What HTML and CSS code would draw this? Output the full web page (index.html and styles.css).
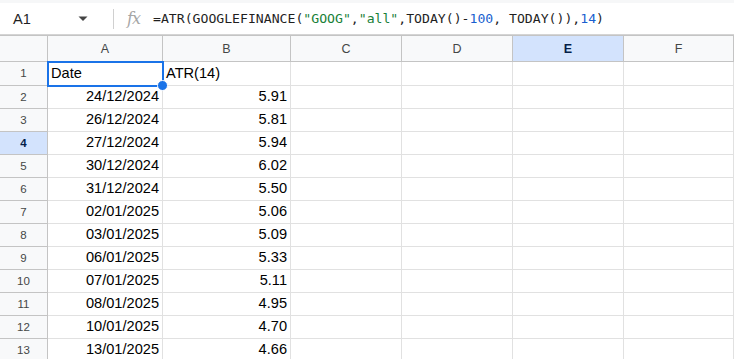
FILE: index.html
```html
<!DOCTYPE html>
<html>
<head>
<meta charset="utf-8">
<link rel="stylesheet" href="styles.css">
</head>
<body>
<div class="topstrip"></div>
<div class="fbar">
  <div class="namebox">A1</div>
  <div class="dd"><svg width="10" height="6" viewBox="0 0 10 6"><path d="M0.5 0.5 L9.5 0.5 L5 5 Z" fill="#444"/></svg></div>
  <div class="sep"></div>
  <div class="fx">fx</div>
  <div class="formula">=ATR(GOOGLEFINANCE(<span class="str">"GOOG"</span>,<span class="str">"all"</span>,TODAY()-<span class="num">100</span>, TODAY()),<span class="num">14</span>)</div>
</div>
<div class="grid">
  <div class="hd corner"></div>
  <div class="hd col">A</div>
  <div class="hd col">B</div>
  <div class="hd col">C</div>
  <div class="hd col">D</div>
  <div class="hd col sel">E</div>
  <div class="hd col">F</div>

  <div class="hd rh r1">1</div>
  <div class="c r1 l active">Date<span class="handle"></span></div>
  <div class="c r1 l">ATR(14)</div>
  <div class="c r1"></div><div class="c r1"></div><div class="c r1"></div><div class="c r1"></div>

  <div class="hd rh">2</div><div class="c">24/12/2024</div><div class="c">5.91</div><div class="c"></div><div class="c"></div><div class="c"></div><div class="c"></div>
  <div class="hd rh">3</div><div class="c">26/12/2024</div><div class="c">5.81</div><div class="c"></div><div class="c"></div><div class="c"></div><div class="c"></div>
  <div class="hd rh sel">4</div><div class="c">27/12/2024</div><div class="c">5.94</div><div class="c"></div><div class="c"></div><div class="c"></div><div class="c"></div>
  <div class="hd rh">5</div><div class="c">30/12/2024</div><div class="c">6.02</div><div class="c"></div><div class="c"></div><div class="c"></div><div class="c"></div>
  <div class="hd rh">6</div><div class="c">31/12/2024</div><div class="c">5.50</div><div class="c"></div><div class="c"></div><div class="c"></div><div class="c"></div>
  <div class="hd rh">7</div><div class="c">02/01/2025</div><div class="c">5.06</div><div class="c"></div><div class="c"></div><div class="c"></div><div class="c"></div>
  <div class="hd rh">8</div><div class="c">03/01/2025</div><div class="c">5.09</div><div class="c"></div><div class="c"></div><div class="c"></div><div class="c"></div>
  <div class="hd rh">9</div><div class="c">06/01/2025</div><div class="c">5.33</div><div class="c"></div><div class="c"></div><div class="c"></div><div class="c"></div>
  <div class="hd rh">10</div><div class="c">07/01/2025</div><div class="c">5.11</div><div class="c"></div><div class="c"></div><div class="c"></div><div class="c"></div>
  <div class="hd rh">11</div><div class="c">08/01/2025</div><div class="c">4.95</div><div class="c"></div><div class="c"></div><div class="c"></div><div class="c"></div>
  <div class="hd rh">12</div><div class="c">10/01/2025</div><div class="c">4.70</div><div class="c"></div><div class="c"></div><div class="c"></div><div class="c"></div>
  <div class="hd rh">13</div><div class="c">13/01/2025</div><div class="c">4.66</div><div class="c"></div><div class="c"></div><div class="c"></div><div class="c"></div>
</div>
</body>
</html>
```
FILE: styles.css
```css
html, body {
  margin: 0;
  padding: 0;
  background: #fff;
  overflow: hidden;
}
body {
  width: 734px;
  height: 359px;
  font-family: "Liberation Sans", Arial, sans-serif;
}
.topstrip {
  height: 3px;
  background: #f6f7f8;
}
.fbar {
  border-bottom: 1px solid #d4d4d4;
  display: flex;
  align-items: center;
  box-sizing: border-box;
  height: 32px;
}
.namebox {
  width: 78px;
  padding-left: 13px;
  font-size: 14.6px;
  color: #1f1f1f;
  box-sizing: border-box;
}
.dd {
  width: 20px;
  display: flex;
  align-items: center;
  padding-top: 1px;
}
.sep {
  width: 1px;
  height: 20px;
  background: #d0d0d0;
  margin-left: 15px;
}
.fx {
  margin-left: 13px;
  width: 26px;
  font-family: "DejaVu Serif", "Liberation Serif", serif;
  font-style: italic;
  font-size: 16px;
  color: #a6a6a6;
  letter-spacing: -1px;
}
.formula {
  font-family: "DejaVu Sans Mono", "Liberation Mono", monospace;
  font-size: 13.15px;
  color: #1f1f1f;
  white-space: nowrap;
}
.formula .str { color: #188038; }
.formula .num { color: #1a5fcf; }

.grid {
  display: grid;
  grid-template-columns: 48px 115px 128px 111px 111px 111px 110px;
  grid-auto-rows: 23px;
  grid-template-rows: 26px 24px;
  border-top: 1px solid #c4c4c4;
}
.hd {
  background: #f8f9fa;
  border-right: 1px solid #c4c4c4;
  border-bottom: 1px solid #c4c4c4;
  box-sizing: border-box;
  display: flex;
  align-items: center;
  justify-content: center;
  font-family: "Liberation Sans", Arial, sans-serif;
  color: #444746;
}
.col {
  font-size: 12.5px;
  padding-top: 1px;
}
.rh {
  font-size: 11.5px;
  padding-bottom: 1px;
}
.hd.sel {
  background: #d3e3fd;
  color: #041e49;
  font-weight: bold;
}
.c {
  border-right: 1px solid #e1e1e1;
  border-bottom: 1px solid #e1e1e1;
  box-sizing: border-box;
  display: flex;
  align-items: flex-end;
  justify-content: flex-end;
  padding: 0 3px 3px 3px;
  font-size: 14.6px;
  line-height: 17px;
  color: #000;
  white-space: nowrap;
  position: relative;
}
.c.l {
  justify-content: flex-start;
}
.active {
  outline: 2px solid #1a73e8;
  outline-offset: -1px;
  z-index: 2;
}
.handle {
  position: absolute;
  right: -6px;
  bottom: -6px;
  width: 9px;
  height: 9px;
  border-radius: 50%;
  background: #1a73e8;
  border: 1px solid #fff;
  z-index: 3;
}
```
